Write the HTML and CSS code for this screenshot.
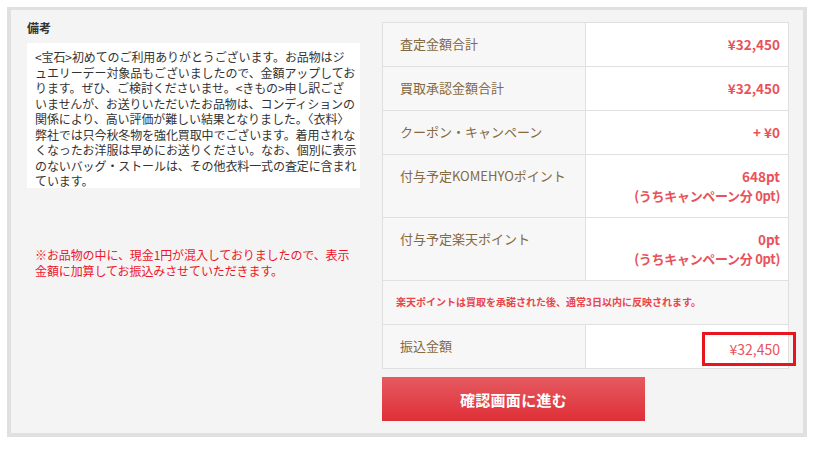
FILE: index.html
```html
<!DOCTYPE html>
<html lang="ja">
<head>
<meta charset="utf-8">
<link rel="stylesheet" href="styles.css">
</head>
<body>
<div class="frame">
  <div class="left">
    <h2 class="remarks-title">備考</h2>
    <div class="remarks">&lt;宝石&gt;初めてのご利用ありがとうございます。お品物はジ<br>ュエリーデー対象品もございましたので、金額アップしてお<br>ります。ぜひ、ご検討くださいませ。&lt;きもの&gt;申し訳ござ<br>いませんが、お送りいただいたお品物は、コンディションの<br>関係により、高い評価が難しい結果となりました。〈衣料〉<br>弊社では只今秋冬物を強化買取中でございます。着用されな<br>くなったお洋服は早めにお送りください。なお、個別に表示<br>のないバッグ・ストールは、その他衣料一式の査定に含まれ<br>ています。</div>
    <p class="cash-note">※お品物の中に、現金1円が混入しておりましたので、表示<br>金額に加算してお振込みさせていただきます。</p>
  </div>
  <div class="right">
    <table class="summary">
      <colgroup><col class="c1"><col class="c2"></colgroup>
      <tr><th>査定金額合計</th><td>¥32,450</td></tr>
      <tr><th>買取承認金額合計</th><td>¥32,450</td></tr>
      <tr><th>クーポン・キャンペーン</th><td>+ ¥0</td></tr>
      <tr class="double"><th>付与予定KOMEHYOポイント</th><td>648pt<br><span class="sub">(うちキャンペーン分 0pt)</span></td></tr>
      <tr class="double"><th>付与予定楽天ポイント</th><td>0pt<br><span class="sub">(うちキャンペーン分 0pt)</span></td></tr>
      <tr><td colspan="2" class="notice">楽天ポイントは買取を承諾された後、通常3日以内に反映されます。</td></tr>
      <tr><th>振込金額</th><td class="transfer">¥32,450</td></tr>
    </table>
    <div class="highlight"></div>
    <button class="confirm" type="button">確認画面に進む</button>
  </div>
</div>
</body>
</html>
```
FILE: styles.css
```css
html, body {
  margin: 0;
  padding: 0;
  background: #ffffff;
  font-family: "Noto Sans CJK JP", "Noto Sans", sans-serif;
}

.frame {
  box-sizing: border-box;
  width: 800px;
  height: 430px;
  margin: 7px 0 0 7px;
  border-style: solid;
  border-color: #e0e0e0;
  border-width: 3px 4px 4px 4px;
  background: #f4f4f4;
  padding: 12px 14px 0 16px;
  display: flex;
  gap: 22px;
}

.left {
  width: 333px;
  flex: none;
}

.remarks-title {
  margin: -2px 0 7px 0;
  font-size: 12px;
  line-height: 16px;
  font-weight: bold;
  color: #333333;
}

.remarks {
  background: #ffffff;
  padding: 6px 8px 0 8px;
  height: 139px;
  font-size: 12px;
  line-height: 15.5px;
  color: #333333;
  white-space: nowrap;
  letter-spacing: -0.1px;
}

.cash-note {
  margin: 59px 0 0 8px;
  font-size: 12px;
  line-height: 16px;
  color: #f0142a;
  white-space: nowrap;
  letter-spacing: -0.1px;
}

.right {
  width: 407px;
  flex: none;
  position: relative;
}

.summary {
  box-sizing: border-box;
  width: 407px;
  table-layout: fixed;
  border-collapse: separate;
  border-spacing: 0;
  border-top: 1px solid #e0e0e0;
  border-left: 1px solid #e0e0e0;
  font-size: 13px;
  line-height: 20px;
}

.summary .c1 { width: 203px; }
.summary .c2 { width: 203px; }

.summary th,
.summary td {
  border-right: 1px solid #e0e0e0;
  border-bottom: 1px solid #e0e0e0;
  vertical-align: top;
  padding: 11px 8px 12px 17px;
}

.summary .double th,
.summary .double td {
  padding-bottom: 11px;
}

.summary th {
  background: #f7f7f7;
  text-align: left;
  font-weight: normal;
  color: #85693f;
}

.summary td {
  background: #ffffff;
  text-align: right;
  font-weight: bold;
  color: #e8525a;
  font-size: 13.5px;
}

.summary td .sub {
  font-size: 13px;
  letter-spacing: -0.3px;
  vertical-align: top;
}

.summary td.notice {
  background: #f7f7f7;
  text-align: left;
  padding-left: 13px;
  font-size: 10px;
  color: #e8454d;
}

.summary td.transfer {
  padding-top: 14px;
  padding-bottom: 9px;
  font-weight: normal;
  font-size: 14px;
}

.highlight {
  position: absolute;
  left: 320px;
  top: 310px;
  width: 94px;
  height: 34px;
  box-sizing: border-box;
  border: 3px solid #e8141e;
}

.confirm {
  display: block;
  margin-top: 8px;
  width: 263px;
  height: 44px;
  border: none;
  padding: 0;
  background: linear-gradient(to bottom, #e55a60, #df2f38);
  color: #ffffff;
  font-family: "Noto Sans CJK JP", sans-serif;
  font-size: 15px;
  font-weight: bold;
  letter-spacing: 0.3px;
}
```
